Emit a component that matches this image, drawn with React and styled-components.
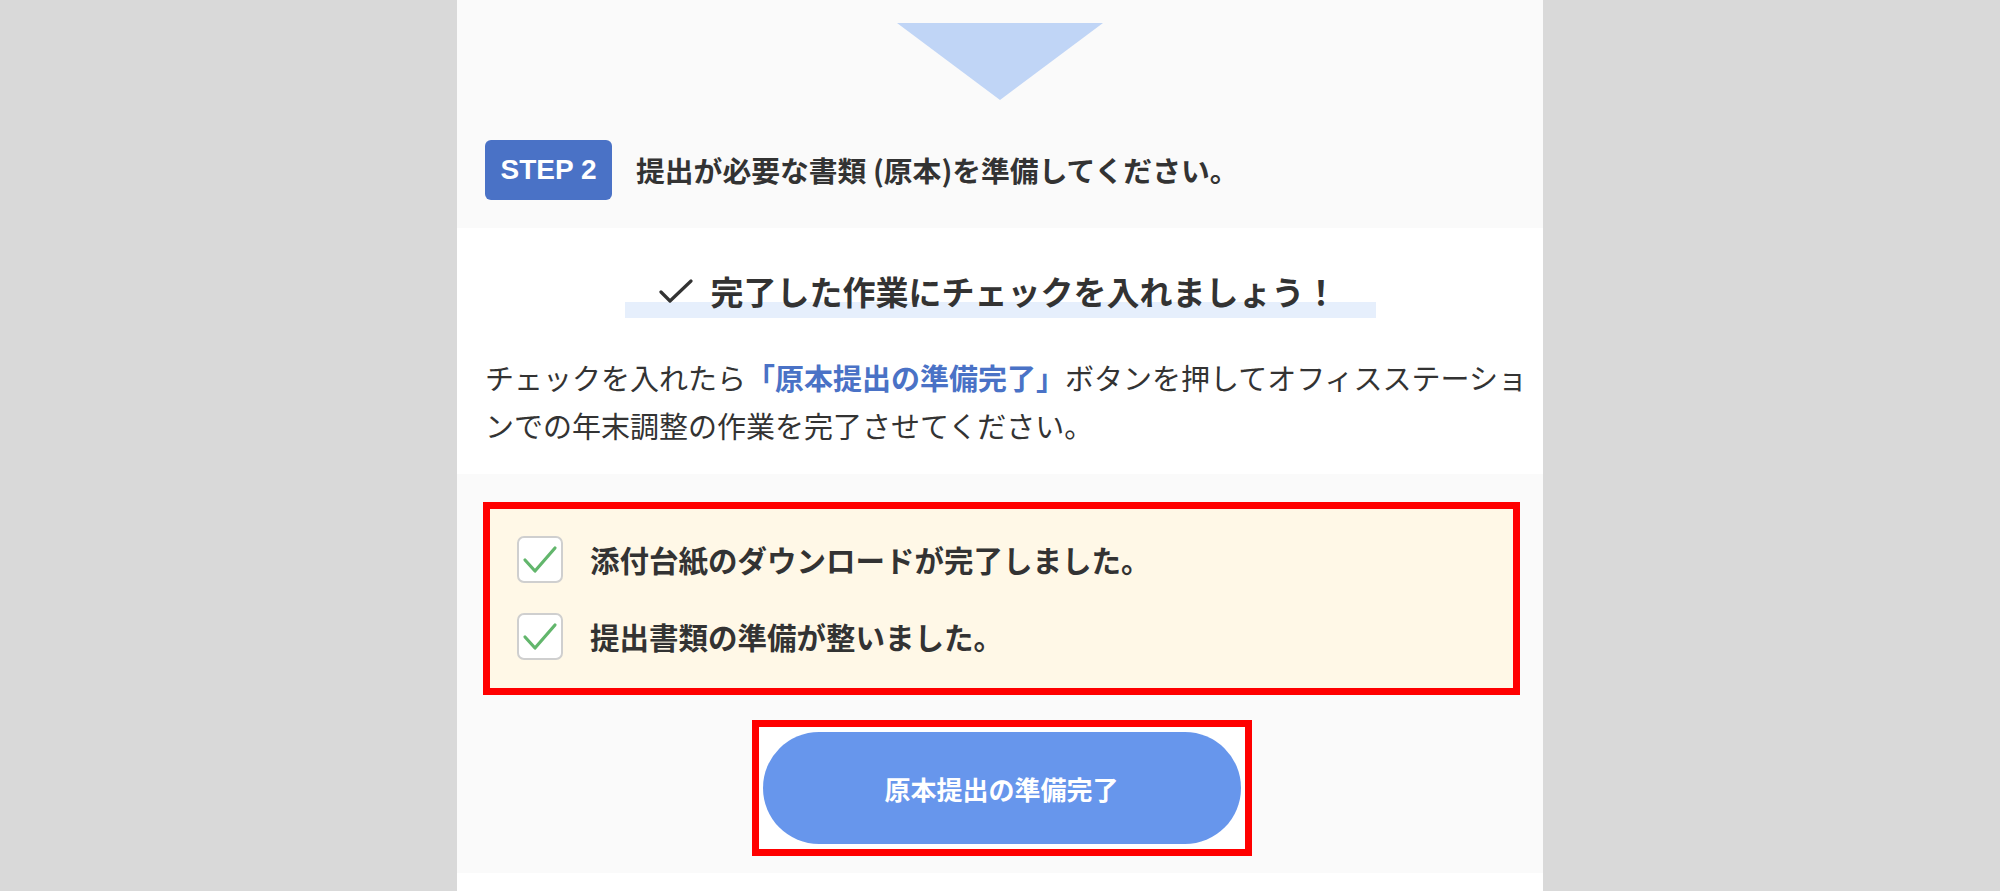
import React, { useState } from 'react';
import styled, { createGlobalStyle } from 'styled-components';

const GlobalStyle = createGlobalStyle`
  html, body {
    margin: 0;
    padding: 0;
    background: #d9d9d9;
  }
  body {
    font-family: "Noto Sans CJK JP", "Noto Sans", sans-serif;
    color: #333;
  }
`;

const Panel = styled.div`
  width: 1086px;
  margin: 0 auto;
  background: #fff;
`;

const TopSection = styled.section`
  background: #fafafa;
  padding: 23px 28px 28px;
`;

const Arrow = styled.div`
  width: 0;
  height: 0;
  margin: 0 auto;
  border-left: 103px solid transparent;
  border-right: 103px solid transparent;
  border-top: 77px solid #c0d5f6;
`;

const StepRow = styled.div`
  display: flex;
  align-items: center;
  gap: 24px;
  margin-top: 40px;
`;

const StepBadge = styled.span`
  display: inline-flex;
  align-items: center;
  justify-content: center;
  width: 127px;
  height: 60px;
  border-radius: 6px;
  background: #4a72c6;
  color: #fff;
  font-family: "Liberation Sans", Arial, sans-serif;
  font-weight: 700;
  font-size: 28px;
`;

const StepText = styled.h2`
  margin: 0;
  font-size: 28.8px;
  font-weight: 700;
  line-height: 1.3;
`;

const WhiteSection = styled.section`
  background: #fff;
  padding: 38px 12px 25px 28px;
`;

const HeadingWrap = styled.div`
  text-align: center;
  padding-right: 16px;
`;

const Heading = styled.h3`
  display: inline-flex;
  align-items: center;
  gap: 18px;
  margin: 0;
  padding: 0 38px 2px 34px;
  height: 50px;
  font-size: 33px;
  font-weight: 700;
  line-height: 50px;
  background: linear-gradient(transparent 36px, #e6effc 36px);
`;

const Description = styled.p`
  margin: 35px 0 0;
  font-size: 29px;
  line-height: 48px;
`;

const Emphasis = styled.strong`
  color: #4a72c6;
  font-weight: 700;
`;

const GraySection = styled.section`
  background: #fafafa;
  padding: 28px 23px 17px 26px;
`;

const CheckBox = styled.div`
  display: flex;
  flex-direction: column;
  gap: 30px;
  border: 7px solid #ff0000;
  background: #fff8e7;
  padding: 27px 27px 28px;
`;

const CheckRow = styled.label`
  display: flex;
  align-items: center;
  gap: 27px;
  cursor: pointer;
`;

const Tick = styled.span`
  flex: none;
  display: flex;
  align-items: center;
  justify-content: center;
  width: 46px;
  height: 47px;
  box-sizing: border-box;
  border: 2px solid #cfcfcf;
  border-radius: 7px;
  background: #fff;
`;

const CheckLabel = styled.span`
  font-size: 29.5px;
  font-weight: 700;
  line-height: 1.3;
`;

const ButtonFrame = styled.div`
  width: fit-content;
  margin: 25px auto 0;
  border: 7px solid #ff0000;
  background: #fff;
  padding: 5px 4px;
`;

const DoneButton = styled.button`
  display: block;
  width: 478px;
  height: 112px;
  border: none;
  border-radius: 56px;
  background: #6796ec;
  color: #fff;
  font-family: "Noto Sans CJK JP", sans-serif;
  font-size: 26px;
  font-weight: 700;
  cursor: pointer;
`;

const Footer = styled.div`
  height: 40px;
  background: #fff;
`;

const HeadCheck = () => (
  <svg width="34" height="25" viewBox="0 0 34 25" fill="none">
    <polyline points="2,13 11,22 32,2" stroke="#333" strokeWidth="3.2" strokeLinecap="round" strokeLinejoin="round" />
  </svg>
);

const GreenCheck = ({ on }) => (
  <svg width="36" height="30" viewBox="0 0 36 30" fill="none">
    {on && (
      <polyline points="3,15 13,26 33,3" stroke="#62b66c" strokeWidth="3.2" strokeLinecap="round" strokeLinejoin="round" />
    )}
  </svg>
);

const items = [
  '添付台紙のダウンロードが完了しました。',
  '提出書類の準備が整いました。',
];

const App = () => {
  const [checked, setChecked] = useState([true, true]);

  const toggle = (i) => {
    setChecked(checked.map((v, j) => (j === i ? !v : v)));
  };

  return (
    <>
      <GlobalStyle />
      <Panel>
        <TopSection>
          <Arrow />
          <StepRow>
            <StepBadge>STEP 2</StepBadge>
            <StepText>提出が必要な書類 (原本)を準備してください。</StepText>
          </StepRow>
        </TopSection>

        <WhiteSection>
          <HeadingWrap>
            <Heading>
              <HeadCheck />
              完了した作業にチェックを入れましょう！
            </Heading>
          </HeadingWrap>
          <Description>
            チェックを入れたら<Emphasis>「原本提出の準備完了」</Emphasis>ボタンを押してオフィスステーションでの年末調整の作業を完了させてください。
          </Description>
        </WhiteSection>

        <GraySection>
          <CheckBox>
            {items.map((text, i) => (
              <CheckRow key={text} onClick={() => toggle(i)}>
                <Tick>
                  <GreenCheck on={checked[i]} />
                </Tick>
                <CheckLabel>{text}</CheckLabel>
              </CheckRow>
            ))}
          </CheckBox>
          <ButtonFrame>
            <DoneButton type="button">原本提出の準備完了</DoneButton>
          </ButtonFrame>
        </GraySection>
        <Footer />
      </Panel>
    </>
  );
};

export default App;
